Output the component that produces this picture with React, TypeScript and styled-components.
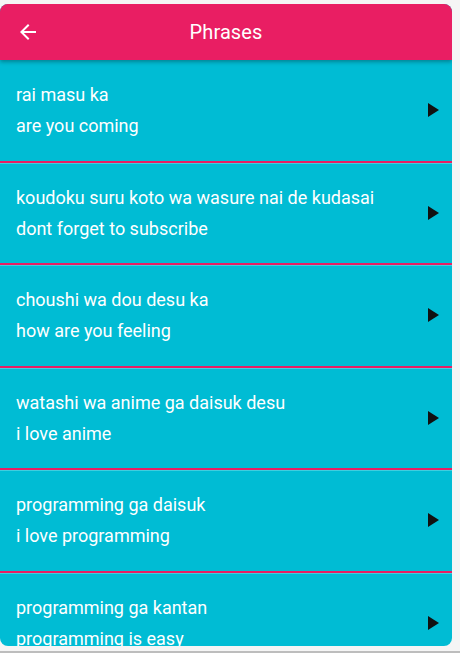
import styled, { createGlobalStyle } from "styled-components";

const GlobalStyle = createGlobalStyle`
  html, body {
    margin: 0;
    padding: 0;
    background: #f5f5f5;
    font-family: Roboto, "Noto Sans", Arial, sans-serif;
  }
`;

const Page = styled.div`
  height: 653px;
  box-sizing: border-box;
  padding-top: 4px;
  border-bottom: 2px solid #bdbdbd;
  overflow: hidden;
`;

const Card = styled.div`
  width: 452px;
  height: 642px;
  border-radius: 8px;
  overflow: hidden;
  background: #00bcd4;
  display: flex;
  flex-direction: column;
`;

const Toolbar = styled.header`
  position: relative;
  z-index: 1;
  height: 56px;
  flex-shrink: 0;
  background: #e91e63;
  color: #fff;
  display: flex;
  align-items: center;
  padding: 0 16px;
  box-shadow: 0 2px 4px rgba(0, 0, 0, 0.3);
`;

const BackButton = styled.button`
  width: 24px;
  height: 24px;
  padding: 0;
  border: none;
  background: none;
  color: #fff;
  display: flex;
  align-items: center;
  justify-content: center;
  cursor: pointer;
`;

const Title = styled.h1`
  flex: 1;
  margin: 0 24px 0 0;
  text-align: center;
  font-size: 20px;
  font-weight: 400;
  letter-spacing: 0.1px;
`;

const List = styled.ul`
  list-style: none;
  margin: 0;
  padding: 0;
  flex: 1;
  overflow: hidden;
`;

const Row = styled.li`
  height: 100.5px;
  padding: 0 16px;
  display: flex;
  align-items: center;
  border-bottom: 2px solid #e91e63;
  box-shadow: 0 1px 0 rgba(255, 255, 255, 0.25);
  color: #fff;
  cursor: pointer;
`;

const Texts = styled.div`
  flex: 1;
  display: flex;
  flex-direction: column;
`;

const Line = styled.span`
  font-size: 18px;
  line-height: 31px;
`;

const Chevron = styled.svg`
  flex-shrink: 0;
  margin-right: -4px;
`;

const phrases = [
  { jp: "rai masu ka", en: "are you coming" },
  { jp: "koudoku suru koto wa wasure nai de kudasai", en: "dont forget to subscribe" },
  { jp: "choushi wa dou desu ka", en: "how are you feeling" },
  { jp: "watashi wa anime ga daisuk desu", en: "i love anime" },
  { jp: "programming ga daisuk", en: "i love programming" },
  { jp: "programming ga kantan", en: "programming is easy" },
];

export default function App() {
  return (
    <>
      <GlobalStyle />
      <Page>
        <Card>
          <Toolbar>
            <BackButton aria-label="back">
              <svg width="24" height="24" viewBox="0 0 24 24" fill="currentColor">
                <path d="M20 11H7.83l5.59-5.59L12 4l-8 8 8 8 1.41-1.41L7.83 13H20v-2z" />
              </svg>
            </BackButton>
            <Title>Phrases</Title>
          </Toolbar>
          <List>
            {phrases.map((p) => (
              <Row key={p.jp}>
                <Texts>
                  <Line>{p.jp}</Line>
                  <Line>{p.en}</Line>
                </Texts>
                <Chevron width="12" height="14" viewBox="0 0 12 14">
                  <polygon points="0,0 11,7 0,14" fill="#111" />
                </Chevron>
              </Row>
            ))}
          </List>
        </Card>
      </Page>
    </>
  );
}
